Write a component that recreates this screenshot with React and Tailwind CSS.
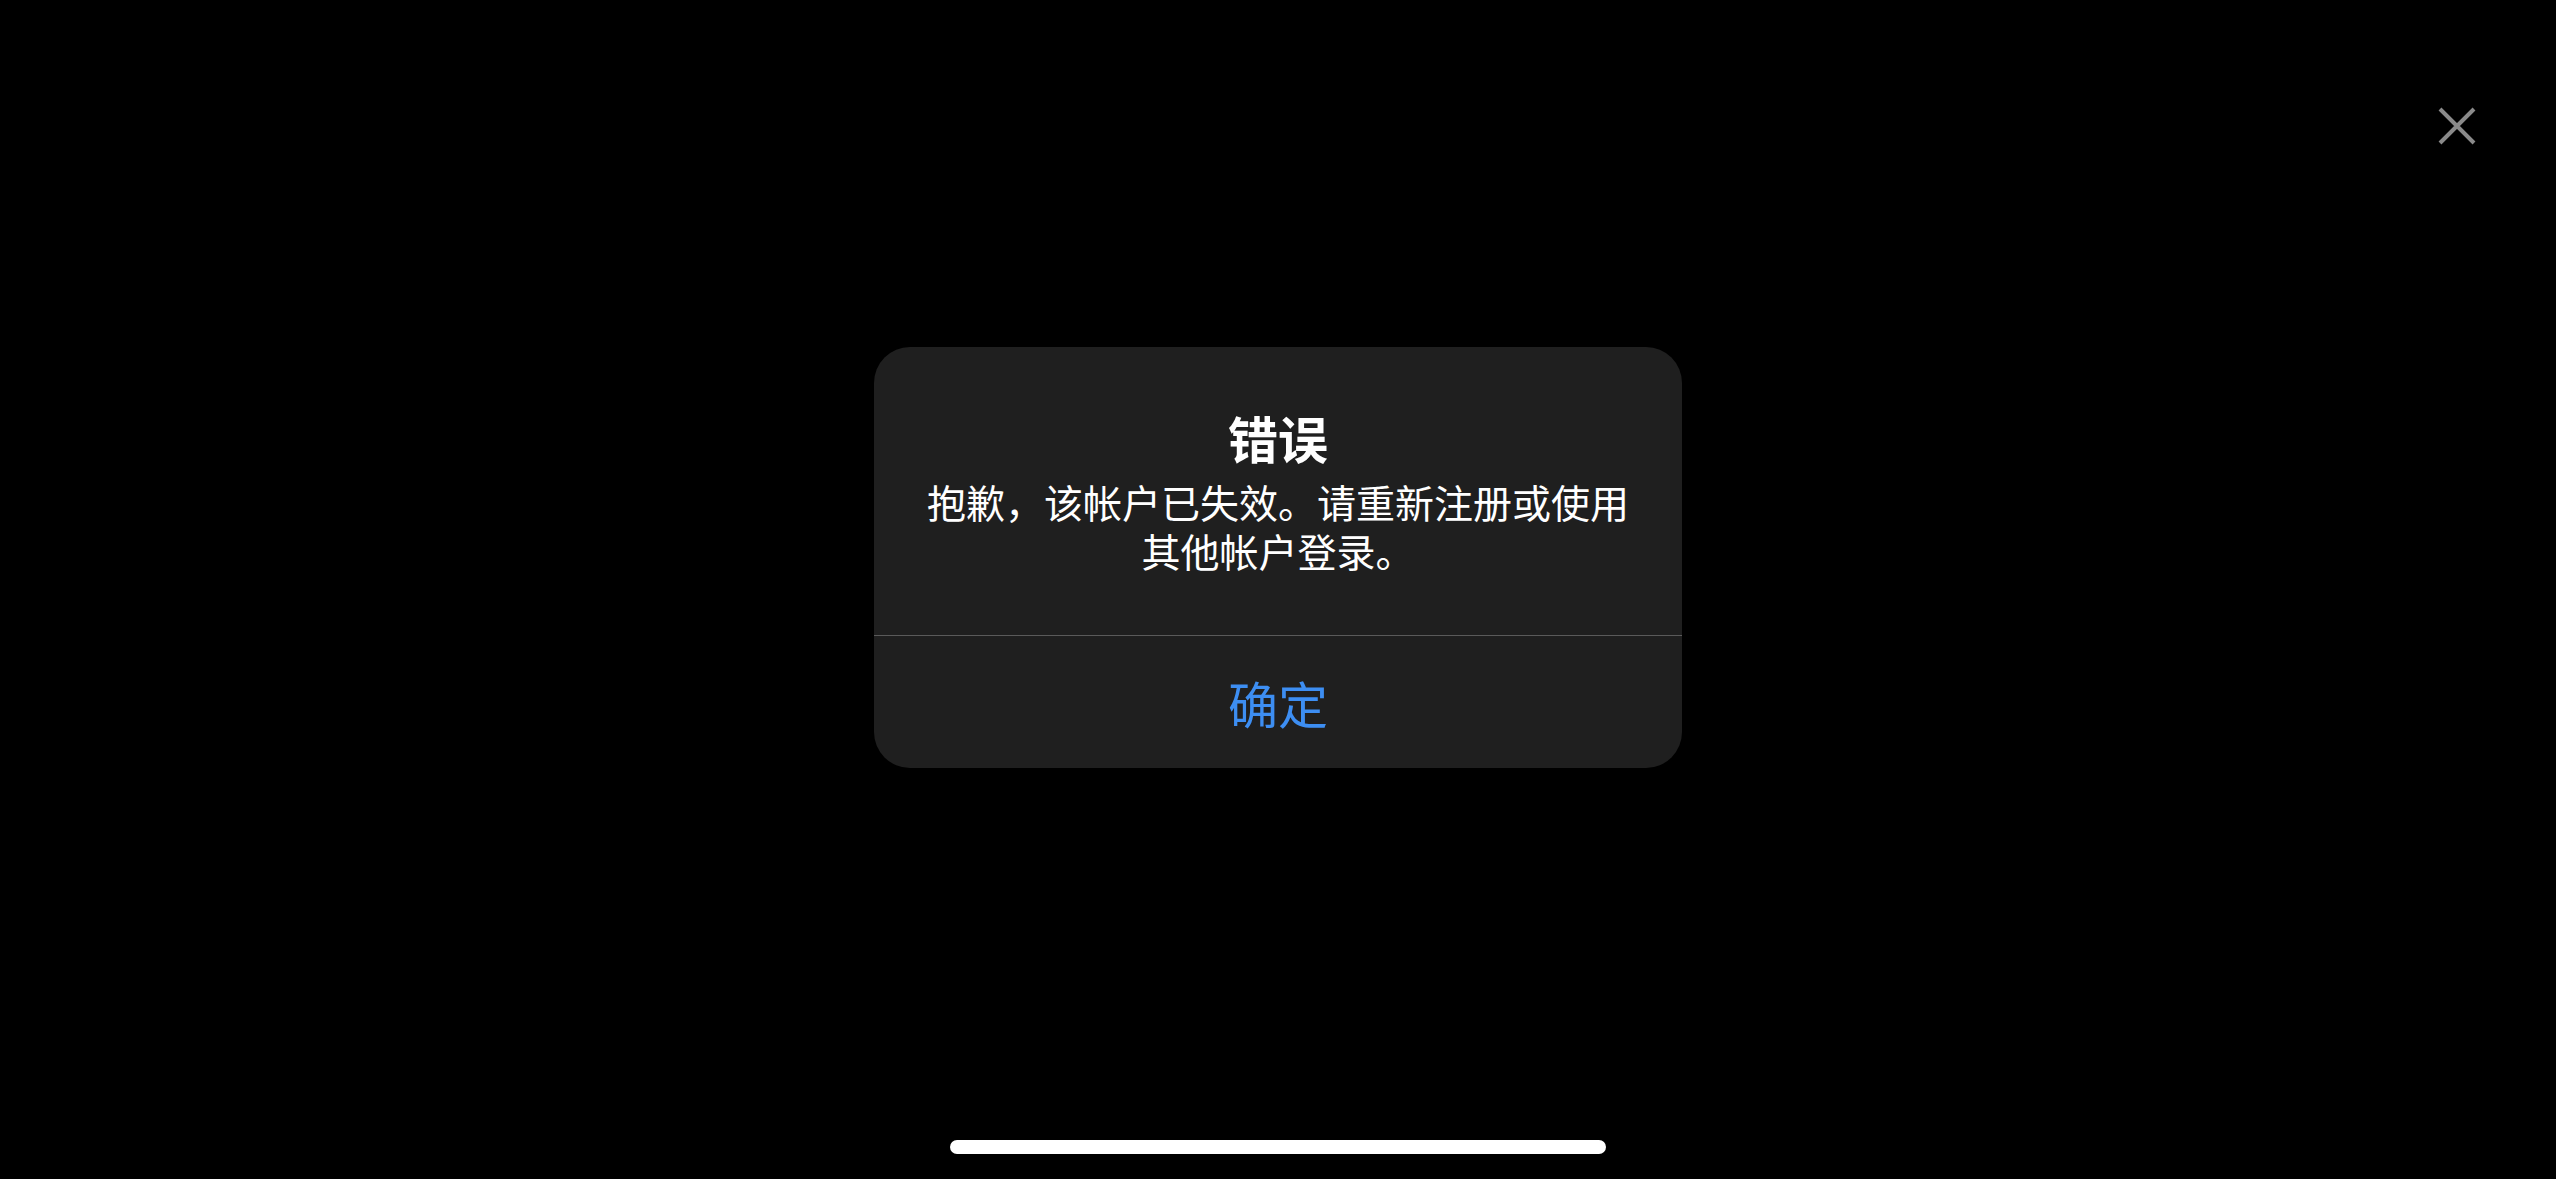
export default function App() {
  return (
    <div
      className="w-full h-[1179px] bg-black flex flex-col items-center overflow-hidden"
      style={{ fontFamily: '"Noto Sans CJK SC", "Noto Sans", sans-serif' }}
    >
      <div className="w-full flex justify-end pt-[107px] pr-[80px]">
        <svg width="38" height="38" viewBox="0 0 38 38" className="block">
          <path d="M2 2 L36 36 M36 2 L2 36" stroke="#8a8a8a" strokeWidth="4" strokeLinecap="butt" />
        </svg>
      </div>

      <div className="mt-[202px] w-[808px] bg-[#1f1f1f] rounded-[36px] flex flex-col overflow-hidden">
        <div className="flex flex-col items-center px-[40px] pt-[60px] pb-[60px]">
          <div className="text-white text-[50px] leading-[60px] font-bold">错误</div>
          <div className="mt-[10px] text-white text-[39px] leading-[49px] text-center">
            抱歉，该帐户已失效。请重新注册或使用
            <br />
            其他帐户登录。
          </div>
        </div>
        <div className="h-[1px] bg-[#5a5a5a]" />
        <div className="h-[132px] flex items-center justify-center">
          <span className="text-[#3d8ef2] text-[50px] leading-[60px]">确定</span>
        </div>
      </div>

      <div className="mt-auto mb-[25px] w-[656px] h-[14px] rounded-full bg-white" />
    </div>
  );
}
